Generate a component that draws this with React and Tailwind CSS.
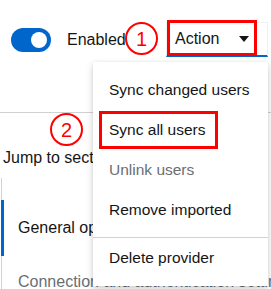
import React from "react";

const font = { fontFamily: '"Liberation Sans", Arial, sans-serif' };

const MenuItem = ({ children, disabled }) => (
  <div
    className={`h-10 px-4 flex items-center text-[15.5px] leading-6 whitespace-nowrap ${
      disabled ? "text-[#6a6e73]" : "text-[#151515]"
    }`}
  >
    {children}
  </div>
);

const Marker = ({ n, className }) => (
  <div
    className={`absolute w-[33px] h-[33px] rounded-full border-2 border-[#ff0000] flex items-center justify-center text-[20px] leading-none text-[#ff0000] ${className}`}
  >
    {n}
  </div>
);

export default function App() {
  return (
    <div
      className="relative w-[271px] h-[289px] overflow-hidden bg-white text-[#151515]"
      style={font}
    >
      {/* header */}
      <div className="h-[113px] border-b border-[#d2d2d2] pt-[22px]">
        <div className="flex items-center h-[35px]">
          <div className="ml-[11px] w-10 h-6 rounded-full bg-[#0066cc] flex items-center justify-end pr-1">
            <div className="w-4 h-4 rounded-full bg-white" />
          </div>
          <span className="ml-4 text-base leading-6">Enabled</span>
          <div className="ml-auto mr-[3px] w-[102px] h-[35px] border border-[#f0f0f0] border-b-2 border-b-[#0066cc] flex items-center justify-between pl-2 pr-[18px]">
            <span className="text-base leading-6">Action</span>
            <svg width="10" height="6" viewBox="0 0 10 6">
              <path d="M0 0h10L5 6z" fill="#151515" />
            </svg>
          </div>
        </div>
      </div>

      {/* jump links */}
      <div className="pt-[33px] pl-[3px] text-base leading-6 whitespace-nowrap">Jump to section</div>
      <div className="mt-[8px] ml-[1px] border-l border-[#d2d2d2] pt-[22px]">
        <div className="relative h-14 flex items-center pl-4 text-base whitespace-nowrap">
          <div className="absolute left-0 -ml-px top-0 bottom-0 w-[3px] bg-[#0066cc]" />
          General options
        </div>
        <div className="h-[52px] flex items-center pl-4 text-base text-[#6a6e73] whitespace-nowrap">
          Connection and authentication settings
        </div>
      </div>

      {/* dropdown menu */}
      <div className="absolute left-[93px] top-[62px] w-[175px] bg-white pt-2 pb-2 shadow-[0_4px_8px_0_rgba(3,3,3,0.16),0_0_4px_0_rgba(3,3,3,0.08)]">
        <MenuItem>Sync changed users</MenuItem>
        <MenuItem>Sync all users</MenuItem>
        <MenuItem disabled>Unlink users</MenuItem>
        <MenuItem>Remove imported</MenuItem>
        <div className="mt-[7px] h-px bg-[#d2d2d2]" />
        <MenuItem>Delete provider</MenuItem>
      </div>

      {/* annotations */}
      <div className="absolute left-[167px] top-[20px] w-[90px] h-[36px] border-[3px] border-[#ff0000]" />
      <Marker n="1" className="left-[125px] top-[22px]" />
      <div className="absolute left-[99px] top-[111px] w-[119px] h-[38px] border-[3px] border-[#ff0000]" />
      <Marker n="2" className="left-[50px] top-[113px]" />
    </div>
  );
}
